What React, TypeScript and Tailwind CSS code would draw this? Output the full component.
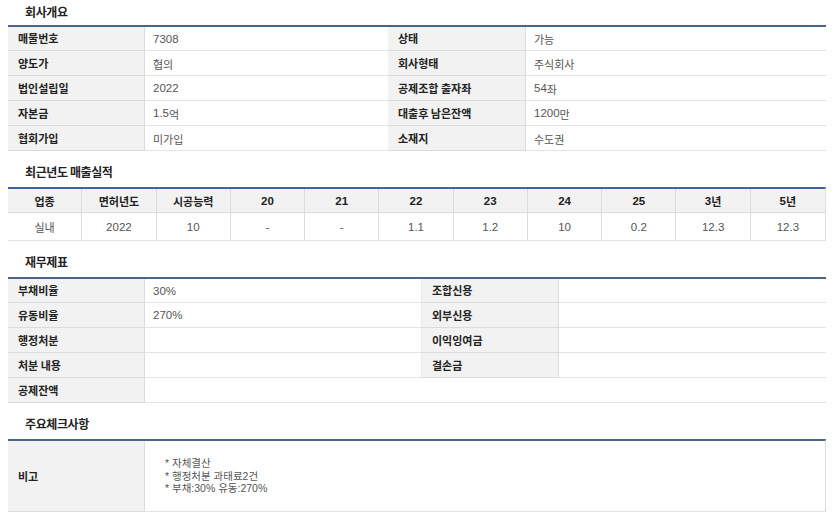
import React from "react";

const FONT = { fontFamily: '"Noto Sans CJK KR", "Noto Sans", sans-serif' };
const VFONT = { fontFamily: '"Liberation Sans", "Noto Sans CJK KR", sans-serif' };

function Mixed({ text }: { text: string }) {
  const parts = text.split(/([\uAC00-\uD7A3]+)/).filter((p) => p !== "");
  return (
    <>
      {parts.map((p, i) =>
        /[\uAC00-\uD7A3]/.test(p) ? (
          <span key={i} className="relative top-[1.5px] text-[11px]">
            {p}
          </span>
        ) : (
          <span key={i}>{p}</span>
        )
      )}
    </>
  );
}

function Title({ children, first }: { children: React.ReactNode; first?: boolean }) {
  return (
    <div
      className={`${first ? "h-[25px] pt-[3px]" : "h-[36px] pt-[12px]"} pl-[17px] text-[12px] leading-[18px] font-bold text-[#222] tracking-[-0.4px]`}
    >
      {children}
    </div>
  );
}

const Label = ({ children, h, extra = "" }: { children?: React.ReactNode; h: string; extra?: string }) => (
  <div
    className={`${h} flex items-center pl-[10px] bg-[#f2f2f2] border-b border-r border-[#dcdcdc] text-[11px] font-bold text-[#222] ${extra}`}
  >
    {children}
  </div>
);

const Value = ({ text, h, extra = "" }: { text?: string; h: string; extra?: string }) => (
  <div
    className={`${h} flex items-center pl-[8px] border-b border-[#e4e4e4] text-[11.5px] leading-[14px] text-[#555] ${extra}`}
    style={VFONT}
  >
    <span>{text ? <Mixed text={text} /> : null}</span>
  </div>
);

export default function App() {
  const overview: [string, string, string, string][] = [
    ["매물번호", "7308", "상태", "가능"],
    ["양도가", "협의", "회사형태", "주식회사"],
    ["법인설립일", "2022", "공제조합 출자좌", "54좌"],
    ["자본금", "1.5억", "대출후 남은잔액", "1200만"],
    ["협회가입", "미가입", "소재지", "수도권"],
  ];
  const heads = ["업종", "면허년도", "시공능력", "20", "21", "22", "23", "24", "25", "3년", "5년"];
  const vals = ["실내", "2022", "10", "-", "-", "1.1", "1.2", "10", "0.2", "12.3", "12.3"];
  const fin: [string, string, string, string][] = [
    ["부채비율", "30%", "조합신용", ""],
    ["유동비율", "270%", "외부신용", ""],
    ["행정처분", "", "이익잉여금", ""],
    ["처분 내용", "", "결손금", ""],
  ];

  return (
    <div className="w-[835px] h-[522px] bg-white overflow-hidden pl-[8px]" style={FONT}>
      <div className="w-[818px]">
        {/* 회사개요 */}
        <Title first>회사개요</Title>
        <div className="border-t-2 border-[#4a6585] grid grid-cols-[137px_243px_138px_300px]">
          {overview.map((r, i) => {
            const h = i === 0 ? "h-[24px]" : "h-[25px]";
            return (
              <React.Fragment key={i}>
                <Label h={h}>{r[0]}</Label>
                <Value h={h} text={r[1]} />
                <Label h={h}>{r[2]}</Label>
                <Value h={h} text={r[3]} />
              </React.Fragment>
            );
          })}
        </div>

        {/* 최근년도 매출실적 */}
        <Title>최근년도 매출실적</Title>
        <div className="border-t-2 border-[#3f64a0] border-r border-r-[#dcdcdc] grid grid-cols-11">
          {heads.map((t, i) => (
            <div
              key={i}
              className={`h-[24px] flex items-center justify-center bg-[#f2f2f2] border-b border-[#dcdcdc] ${i < 10 ? "border-r" : ""} text-[11.5px] leading-[14px] font-bold text-[#222]`}
              style={VFONT}
            >
              <span>
                <Mixed text={t} />
              </span>
            </div>
          ))}
          {vals.map((t, i) => (
            <div
              key={i}
              className={`h-[28px] flex items-center justify-center border-b border-[#e4e4e4] ${i < 10 ? "border-r border-r-[#dcdcdc]" : ""} text-[11.5px] leading-[14px] text-[#555]`}
              style={VFONT}
            >
              <span>
                <Mixed text={t} />
              </span>
            </div>
          ))}
        </div>

        {/* 재무제표 */}
        <Title>재무제표</Title>
        <div className="border-t-2 border-[#4a6585] grid grid-cols-[137px_276px_138px_267px]">
          {fin.map((r, i) => {
            const h = i === 0 ? "h-[24px]" : "h-[25px]";
            return (
              <React.Fragment key={i}>
                <Label h={h}>{r[0]}</Label>
                <Value h={h} text={r[1]} />
                <Label h={h} extra="border-l border-l-[#e8e8e8]">{r[2]}</Label>
                <Value h={h} text={r[3]} />
              </React.Fragment>
            );
          })}
          <Label h="h-[25px]">공제잔액</Label>
          <Value h="h-[25px]" extra="col-span-3" />
        </div>

        {/* 주요체크사항 */}
        <Title>주요체크사항</Title>
        <div className="border-t-2 border-[#4a6585] border-r border-r-[#dcdcdc] grid grid-cols-[137px_1fr]">
          <Label h="h-[71px]">비고</Label>
          <div
            className="h-[71px] flex flex-col justify-center pl-[20px] border-b border-[#e4e4e4] text-[10.5px] leading-[12.5px] text-[#555]"
            style={VFONT}
          >
            <div>* 자체결산</div>
            <div>* 행정처분 과태료2건</div>
            <div>* 부채:30% 유동:270%</div>
          </div>
        </div>
      </div>
    </div>
  );
}
